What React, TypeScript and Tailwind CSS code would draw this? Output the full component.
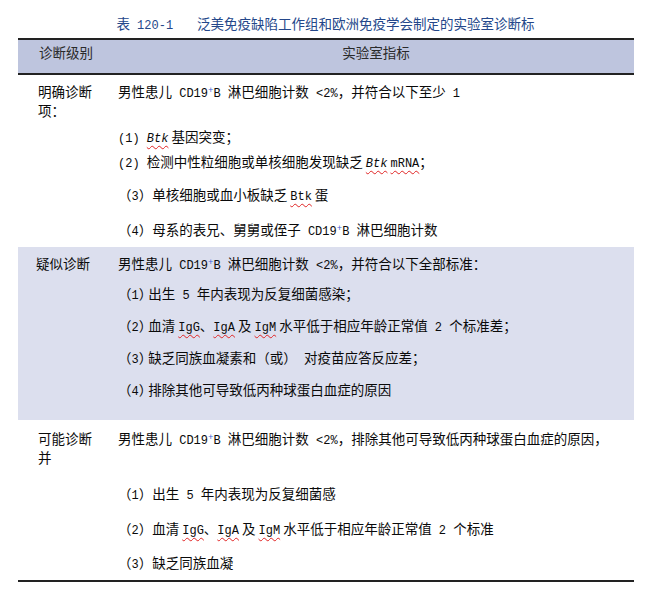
import React from 'react';
import clsx from 'clsx';

// Latin runs are set in a half-width mono face, like the source document
const E = ({ children, className }: { children: React.ReactNode; className?: string }) => (
  <span className={clsx("font-['Liberation_Mono',monospace] text-[12px]", className)}>{children}</span>
);

// spell-check style wavy underline
const W = ({ children, italic = false }: { children: React.ReactNode; italic?: boolean }) => (
  <span
    className={clsx(
      "font-['Liberation_Mono',monospace] text-[12px] underline decoration-wavy decoration-[#e02424] decoration-1 underline-offset-[3px]",
      italic && 'italic'
    )}
  >
    {children}
  </span>
);

const CD19 = () => (
  <E>
    {' '}CD19<sup className="text-[9px] text-[#3d5fd6]">+</sup>B{' '}
  </E>
);

const Paren = ({ n, tight = false }: { n: number; tight?: boolean }) => (
  <>
    （<E>{n}</E>
    <span className={clsx(tight && 'tracking-[-4px]')}>）</span>
  </>
);

// one text line with a fixed box height so mixed fonts don't stretch it
const L = ({ children, className }: { children: React.ReactNode; className?: string }) => (
  <div className={clsx('h-[18px] whitespace-nowrap leading-[18px]', className)}>{children}</div>
);

export default function App() {
  return (
    <div className="w-[651px] h-[594px] overflow-hidden bg-white font-['Noto_Sans_CJK_SC',sans-serif] text-[13.5px] text-[#0a0a0a]">
      {/* title */}
      <div className="h-[38px] pt-[14px] text-center text-[#24478a]">
        <L>
          <span>
            表<E> 120-1</E>
          </span>
          <span className="ml-[24px]">泛美免疫缺陷工作组和欧洲免疫学会制定的实验室诊断标</span>
        </L>
      </div>

      <div className="ml-[18px] w-[616px]">
        {/* header */}
        <div className="flex h-[37px] border-y-2 border-[#222] bg-[#bec5de] text-[#2a2a2a]">
          <div className="w-[100px] shrink-0 pl-[21px] pt-[3px]">
            <L>诊断级别</L>
          </div>
          <div className="flex-1 pt-[3px] text-center">
            <L>实验室指标</L>
          </div>
        </div>

        {/* 明确诊断 */}
        <div className="flex pt-[7px] pb-[9px]">
          <div className="w-[100px] shrink-0 pl-[20px]">
            <L>明确诊断</L>
            <L className="mt-px">项：</L>
          </div>
          <div className="flex-1">
            <L>
              男性患儿<CD19 />淋巴细胞计数<E> &lt;2%</E>，并符合以下至少<E> 1</E>
            </L>
            <L className="mt-[27px]">
              <E>(1) </E>
              <W italic>Btk</W> 基因突变；
            </L>
            <L className="mt-[7px]">
              <E>(2) </E>检测中性粒细胞或单核细胞发现缺乏 <W italic>Btk</W> <W>mRNA</W>；
            </L>
            <L className="mt-[15px]">
              <Paren n={3} />
              单核细胞或血小板缺乏 <W>Btk</W> 蛋
            </L>
            <L className="mt-[17px]">
              <Paren n={4} />
              母系的表兄、舅舅或侄子<CD19 />淋巴细胞计数
            </L>
          </div>
        </div>

        {/* 疑似诊断 */}
        <div className="flex bg-[#dcdfee] pt-[7px] pb-[22px]">
          <div className="w-[100px] shrink-0 pl-[18px]">
            <L>疑似诊断</L>
          </div>
          <div className="flex-1">
            <L>
              男性患儿<CD19 />淋巴细胞计数<E> &lt;2%</E>，并符合以下全部标准：
            </L>
            <L className="mt-[12px]">
              <Paren n={1} tight />
              出生<E> 5 </E>年内表现为反复细菌感染；
            </L>
            <L className="mt-[14px]">
              <Paren n={2} tight />
              血清 <W>IgG</W>、<W>IgA</W> 及 <W>IgM</W> 水平低于相应年龄正常值<E> 2 </E>个标准差；
            </L>
            <L className="mt-[14px]">
              <Paren n={3} tight />
              缺乏同族血凝素和（或）<E> </E>对疫苗应答反应差；
            </L>
            <L className="mt-[14px]">
              <Paren n={4} tight />
              排除其他可导致低丙种球蛋白血症的原因
            </L>
          </div>
        </div>

        {/* 可能诊断 */}
        <div className="flex border-b-2 border-[#222] pt-[9px] pb-[9px]">
          <div className="w-[100px] shrink-0 pl-[20px]">
            <L>可能诊断</L>
            <L className="mt-px">并</L>
          </div>
          <div className="flex-1">
            <L>
              男性患儿<CD19 />淋巴细胞计数<E> &lt;2%</E>，排除其他可导致低丙种球蛋白血症的原因，
            </L>
            <L className="mt-[37px]">
              <Paren n={1} />
              出生<E> 5 </E>年内表现为反复细菌感
            </L>
            <L className="mt-[17px]">
              <Paren n={2} />
              血清 <W>IgG</W>、<W>IgA</W> 及 <W>IgM</W> 水平低于相应年龄正常值<E> 2 </E>个标准
            </L>
            <L className="mt-[16px]">
              <Paren n={3} />
              缺乏同族血凝
            </L>
          </div>
        </div>
      </div>
    </div>
  );
}
